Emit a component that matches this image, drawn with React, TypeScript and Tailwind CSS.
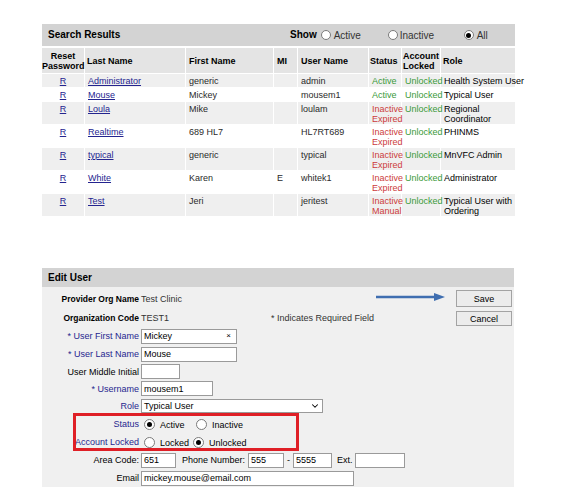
import { ChevronDown } from 'lucide-react';

interface UserRow {
  last: string;
  first: string;
  mi: string;
  user: string;
  status: [string, string?];
  role: string[];
  gray: boolean;
}

const rows: UserRow[] = [
  { last: 'Administrator', first: 'generic', mi: '', user: 'admin', status: ['Active'], role: ['Health System User'], gray: true },
  { last: 'Mouse', first: 'Mickey', mi: '', user: 'mousem1', status: ['Active'], role: ['Typical User'], gray: false },
  { last: 'Loula', first: 'Mike', mi: '', user: 'loulam', status: ['Inactive', 'Expired'], role: ['Regional', 'Coordinator'], gray: true },
  { last: 'Realtime', first: '689 HL7', mi: '', user: 'HL7RT689', status: ['Inactive', 'Expired'], role: ['PHINMS'], gray: false },
  { last: 'typical', first: 'generic', mi: '', user: 'typical', status: ['Inactive', 'Expired'], role: ['MnVFC Admin'], gray: true },
  { last: 'White', first: 'Karen', mi: 'E', user: 'whitek1', status: ['Inactive', 'Expired'], role: ['Administrator'], gray: false },
  { last: 'Test', first: 'Jeri', mi: '', user: 'jeritest', status: ['Inactive', 'Manual'], role: ['Typical User with', 'Ordering'], gray: true },
];

function Radio({ checked, big }: { checked?: boolean; big?: boolean }) {
  return (
    <span className={`inline-flex ${big ? 'w-[11px] h-[11px]' : 'w-[10px] h-[10px]'} rounded-full border border-[#7a7a7a] bg-white items-center justify-center shrink-0`}>
      {checked && <span className="w-[5px] h-[5px] rounded-full bg-black" />}
    </span>
  );
}

function Field({ w, value, clear }: { w: string; value?: string; clear?: boolean }) {
  return (
    <div className={`${w} h-[15px] bg-white border border-[#9a9a9a] flex items-center px-[2px] text-[9px] text-black`}>
      <span className="flex-1">{value}</span>
      {clear && <span className="text-[8px] mr-[3px]">×</span>}
    </div>
  );
}

function FormRow({ h, label, blue, bold, children }: { h: string; label: string; blue?: boolean; bold?: boolean; children?: React.ReactNode }) {
  return (
    <div className={`flex items-center ${h}`}>
      <div className={`w-[99px] text-right pr-[2px] ${blue ? 'text-[#26268f]' : 'text-black'} ${bold ? 'font-bold text-[8.5px]' : ''}`}>
        {label}
      </div>
      <div className="flex items-center flex-1">{children}</div>
    </div>
  );
}

export default function App() {
  return (
    <div className="w-[561px] h-[504px] bg-white relative text-[9px] leading-[10px] text-[#2a2a2a]" style={{ fontFamily: '"Liberation Sans", Arial, sans-serif' }}>
      <div className="pt-[24px] pl-[42px]">
        <div className="w-[473px]">
          <div className="h-[22px] bg-[#d3d3d3] flex items-center pl-[6px] text-[10px] text-black">
            <span className="font-bold w-[242px]">Search Results</span>
            <span className="font-bold mr-[4px]">Show</span>
            <Radio />
            <span className="ml-[3px] w-[54px] pt-[2px] text-[#333]">Active</span>
            <Radio />
            <span className="ml-[2px] w-[64px] pt-[2px] text-[#333]">Inactive</span>
            <Radio checked />
            <span className="ml-[3px] pt-[2px] text-[#333]">All</span>
          </div>
          <table className="table-fixed border-separate border-spacing-[1px] -ml-[1px] mt-[1px]" style={{ width: 475 }}>
            <colgroup>
              <col className="w-[42px]" />
              <col className="w-[100px]" />
              <col className="w-[87px]" />
              <col className="w-[23px]" />
              <col className="w-[70px]" />
              <col className="w-[32px]" />
              <col className="w-[38px]" />
              <col />
            </colgroup>
            <thead>
              <tr className="bg-[#e4e4e4] text-black font-bold">
                <th className="text-center leading-[10px] pt-[3px] pb-[2px] whitespace-nowrap">Reset<br />Password</th>
                <th className="text-left px-[2px] align-middle">Last Name</th>
                <th className="text-left px-[3px] align-middle">First Name</th>
                <th className="text-left px-[3px] align-middle">MI</th>
                <th className="text-left px-[3px] align-middle">User Name</th>
                <th className="text-left px-[1px] align-middle">Status</th>
                <th className="text-left px-[1px] leading-[10px] pt-[3px] pb-[2px]">Account<br />Locked</th>
                <th className="text-left px-[2px] align-middle">Role</th>
              </tr>
            </thead>
            <tbody>
              {rows.map((r, i) => {
                const two = r.status.length > 1 || r.role.length > 1;
                const cell = `px-[3px] pt-[2px] ${two ? 'pb-0' : 'pb-[1px]'} align-top`;
                return (
                  <tr key={i} className={r.gray ? 'bg-[#efefef]' : 'bg-white'}>
                    <td className={`${cell} text-center`}>
                      <span className="text-[#24248f] underline">R</span>
                    </td>
                    <td className={`${cell} px-[2px]`}>
                      <span className="text-[#24248f] underline">{r.last}</span>
                    </td>
                    <td className={cell}>{r.first}</td>
                    <td className={cell}>{r.mi}</td>
                    <td className={cell}>{r.user}</td>
                    <td className={`${cell} px-[1px] ${r.status[0] === 'Active' ? 'text-[#3a9a3a]' : 'text-[#cc3b3b]'}`}>
                      {r.status[0]}
                      {r.status[1] && <br />}
                      {r.status[1]}
                    </td>
                    <td className={`${cell} px-[1px] text-[#3a9a3a]`}>Unlocked</td>
                    <td className={`${cell} px-[2px] text-black whitespace-nowrap`}>
                      {r.role.map((l, j) => (
                        <div key={j}>{l}</div>
                      ))}
                    </td>
                  </tr>
                );
              })}
            </tbody>
          </table>
        </div>
      </div>

      <div className="absolute left-[42px] top-[268px] w-[472px]">
        <div className="h-[19px] bg-[#d3d3d3] flex items-center pl-[6px] text-[10px] font-bold text-black">Edit User</div>
        <div className="bg-[#f0f0f0] pt-[2px] flex relative text-black">
          <div className="flex-1">
            <FormRow h="h-[19px]" label="Provider Org Name" bold>
              <span className="text-[#333]">Test Clinic</span>
            </FormRow>
            <FormRow h="h-[19px]" label="Organization Code" bold>
              <span className="w-[130px] text-[#333]">TEST1</span>
              <span className="text-[#333]">* Indicates Required Field</span>
            </FormRow>
            <FormRow h="h-[18px]" label="* User First Name" blue>
              <Field w="w-[96px]" value="Mickey" clear />
            </FormRow>
            <FormRow h="h-[18px]" label="* User Last Name" blue>
              <Field w="w-[96px]" value="Mouse" />
            </FormRow>
            <FormRow h="h-[17px]" label="User Middle Initial">
              <Field w="w-[39px]" />
            </FormRow>
            <FormRow h="h-[17px]" label="* Username" blue>
              <Field w="w-[72px]" value="mousem1" />
            </FormRow>
            <FormRow h="h-[18px]" label="Role" blue>
              <div className="w-[182px] h-[14px] bg-white border border-[#9a9a9a] flex items-center px-[2px]">
                <span className="flex-1">Typical User</span>
                <ChevronDown size={10} strokeWidth={2.5} className="text-black" />
              </div>
            </FormRow>
            <FormRow h="h-[18px]" label="Status" blue>
              <span className="ml-[3px] flex items-center gap-[5px]">
                <Radio checked big />
                <span className="w-[31px] pt-[2px]">Active</span>
                <Radio big />
                <span className="pt-[2px]">Inactive</span>
              </span>
            </FormRow>
            <FormRow h="h-[18px]" label="Account Locked" blue>
              <span className="ml-[3px] flex items-center gap-[5px]">
                <Radio big />
                <span className="w-[28px] pt-[2px]">Locked</span>
                <Radio checked big />
                <span className="pt-[2px]">Unlocked</span>
              </span>
            </FormRow>
            <FormRow h="h-[18px]" label="Area Code:">
              <Field w="w-[35px]" value="651" />
              <span className="ml-[6px] mr-[3px]">Phone Number:</span>
              <Field w="w-[36px]" value="555" />
              <span className="mx-[3px]">-</span>
              <Field w="w-[39px]" value="5555" />
              <span className="ml-[5px] mr-[2px]">Ext.</span>
              <Field w="w-[50px]" />
            </FormRow>
            <FormRow h="h-[18px]" label="Email">
              <Field w="w-[213px]" value="mickey.mouse@email.com" />
            </FormRow>
          </div>
          <div className="w-[56px] mr-[2px] pt-[1px] flex flex-col gap-[4px]">
            <button className="h-[17px] bg-[#ececec] border border-[#a3a3a3] text-[9px] text-black">Save</button>
            <button className="h-[15px] bg-[#ececec] border border-[#a3a3a3] text-[9px] text-black">Cancel</button>
          </div>
        </div>
      </div>

      <svg className="absolute left-[376px] top-[292px]" width="70" height="10" viewBox="0 0 70 10">
        <line x1="0" y1="5" x2="60" y2="5" stroke="#3f6eb0" strokeWidth="2.5" />
        <polygon points="58,1 69,5 58,9" fill="#3f6eb0" />
      </svg>

      <div className="absolute left-[73px] top-[413px] w-[226px] h-[38px] border-[3px] border-[#df1f26]" />
    </div>
  );
}
